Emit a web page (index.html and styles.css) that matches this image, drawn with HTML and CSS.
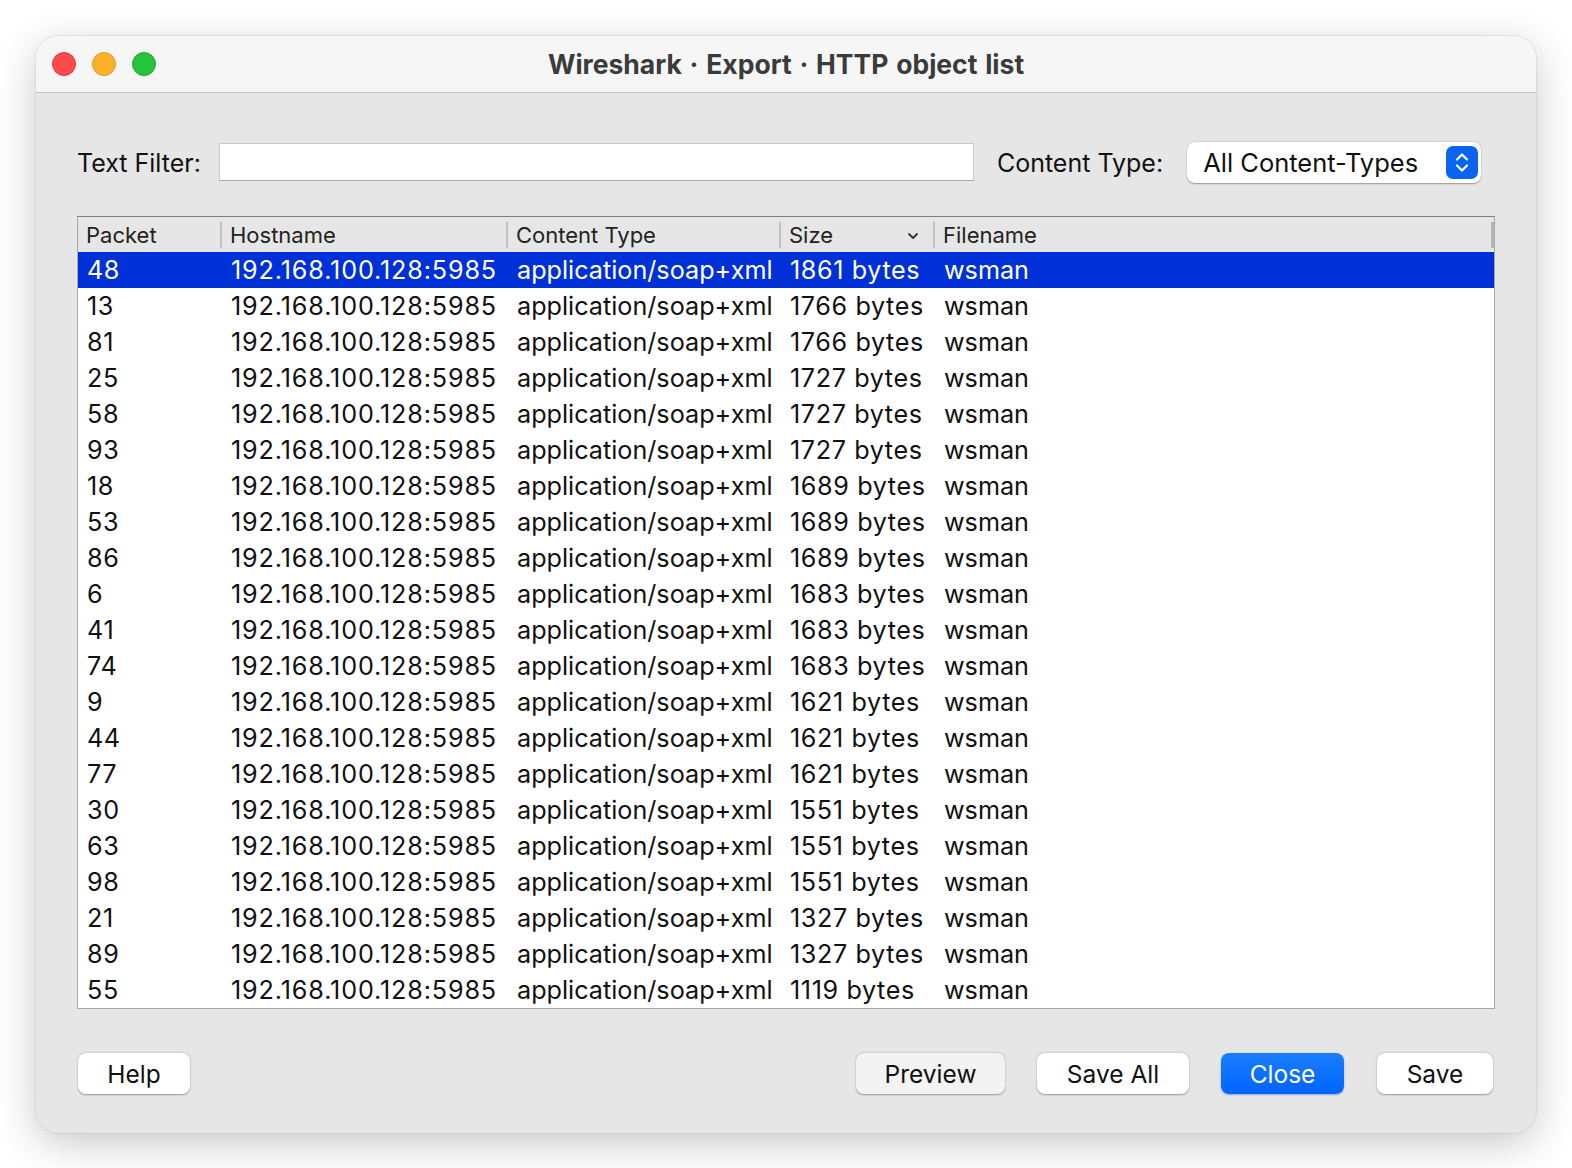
FILE: index.html
```html
<!DOCTYPE html>
<html>
<head>
<meta charset="utf-8">
<link rel="stylesheet" href="styles.css">
</head>
<body>
<div class="window">
  <div class="titlebar">
    <div class="lights">
      <span class="light red"></span>
      <span class="light yellow"></span>
      <span class="light green"></span>
    </div>
    <div class="title">Wireshark · Export · HTTP object list</div>
  </div>
  <div class="content">
    <div class="filter-row">
      <label class="lbl">Text Filter:</label>
      <div class="input"></div>
      <label class="lbl ct">Content Type:</label>
      <div class="select">
        <span>All Content-Types</span>
        <span class="stepper">
          <svg width="32" height="33" viewBox="0 0 32 33">
            <rect x="0" y="0" width="32" height="33" rx="7" fill="#0a64f0"/>
            <path d="M11 13.5 L16 8.5 L21 13.5" fill="none" stroke="#fff" stroke-width="2.2" stroke-linecap="round" stroke-linejoin="round"/>
            <path d="M11 19.5 L16 24.5 L21 19.5" fill="none" stroke="#fff" stroke-width="2.2" stroke-linecap="round" stroke-linejoin="round"/>
          </svg>
        </span>
      </div>
    </div>
    <div class="table">
      <div class="row head">
        <div class="c">Packet</div>
        <div class="c sep">Hostname</div>
        <div class="c sep">Content Type</div>
        <div class="c sep sort">Size<svg class="chev" width="12" height="8" viewBox="0 0 12 8"><path d="M2 2 L6 6 L10 2" fill="none" stroke="#333" stroke-width="1.8" stroke-linecap="round" stroke-linejoin="round"/></svg></div>
        <div class="c sep last">Filename</div>
      </div>
      <div id="rows"></div>
    </div>
    <div class="buttons">
      <button class="btn help">Help</button>
      <div class="spacer"></div>
      <button class="btn preview">Preview</button>
      <button class="btn saveall">Save All</button>
      <button class="btn primary close">Close</button>
      <button class="btn save">Save</button>
    </div>
  </div>
</div>
<script src="script.js"></script>
</body>
</html>
```
FILE: script.js
```js
var data = [
  [48,1861],[13,1766],[81,1766],[25,1727],[58,1727],[93,1727],[18,1689],
  [53,1689],[86,1689],[6,1683],[41,1683],[74,1683],[9,1621],[44,1621],
  [77,1621],[30,1551],[63,1551],[98,1551],[21,1327],[89,1327],[55,1119]
];
var html = '';
data.forEach(function (d, i) {
  html += '<div class="row body' + (i === 0 ? ' selected' : '') + '">' +
    '<div class="c num first">' + d[0] + '</div>' +
    '<div class="c host">192.168.100.128:5985</div>' +
    '<div class="c">application/soap+xml</div>' +
    '<div class="c num">' + d[1] + ' bytes</div>' +
    '<div class="c">wsman</div></div>';
});
document.getElementById('rows').innerHTML = html;
```
FILE: styles.css
```css
html, body {
  margin: 0;
  padding: 0;
  background: #ffffff;
}
body {
  padding: 36px;
  font-family: Inter, "Liberation Sans", sans-serif;
  color: #111;
}
.window {
  width: 1500px;
  height: 1097px;
  border-radius: 22px;
  background: #e6e6e6;
  box-shadow: 0 10px 40px rgba(0,0,0,0.22), 0 0 0 1px rgba(0,0,0,0.06);
  overflow: hidden;
  display: flex;
  flex-direction: column;
}
.titlebar {
  height: 57px;
  flex: none;
  background: #f6f6f6;
  border-bottom: 1px solid #c6c6c6;
  position: relative;
  display: flex;
  align-items: center;
  justify-content: center;
  box-sizing: border-box;
}
.lights {
  position: absolute;
  left: 16px;
  top: 16px;
  display: flex;
  gap: 16px;
}
.light {
  width: 24px;
  height: 24px;
  border-radius: 50%;
  box-sizing: border-box;
}
.red { background: #fe4b4d; border: 1px solid #e2393c; }
.yellow { background: #fdb02a; border: 1px solid #df9820; }
.green { background: #27c33a; border: 1px solid #1ea92d; }
.title {
  font-size: 26.5px;
  font-weight: 700;
  color: #3b3b3b;
  word-spacing: 1.5px;
  margin-top: 0px;
}
.content {
  flex: 1;
  padding: 0 41px 0 41px;
  display: flex;
  flex-direction: column;
}
.filter-row {
  display: flex;
  align-items: center;
  height: 42px;
  margin-top: 48px;
}
.lbl {
  font-size: 25px;
  color: #111;
  margin-top: 1px;
}
.input {
  width: 755px;
  height: 38px;
  margin-left: 18px;
  background: #fff;
  border: 1px solid #c9c9c9;
  border-bottom-color: #a8a8a8;
  box-sizing: border-box;
}
.lbl.ct {
  margin-left: 23px;
}
.select {
  margin-left: 24px;
  width: 294px;
  height: 41px;
  background: #fff;
  border-radius: 8px;
  box-shadow: 0 0.5px 1.5px rgba(0,0,0,0.35);
  display: flex;
  align-items: center;
  justify-content: space-between;
  box-sizing: border-box;
  padding: 0 3px 0 16px;
  font-size: 25.5px;
  color: #111;
}
.stepper { display: flex; }
.table {
  margin-top: 33px;
  background: #fff;
  border: 1px solid #a9a9a9;
  border-top-color: #7e7e7e;
  height: 793px;
  box-sizing: border-box;
  overflow: hidden;
}
.row {
  display: grid;
  grid-template-columns: 142px 286px 273px 154px 1fr;
  height: 36px;
  align-items: center;
}
.row.head {
  background: #e6e6e6;
  height: 35px;
  font-size: 22px;
  color: #222;
}
.head .c {
  padding-left: 8px;
  height: 26px;
  display: flex;
  align-items: center;
  position: relative;
}
.head .c.sep {
  border-left: 2px solid #c2c2c2;
  padding-left: 8px;
}
.head .c.last { border-right: 3px solid #b5b5b5; }
.head .sort { justify-content: space-between; padding-right: 14px; }
.chev { margin-top: 2px; }
.row.body {
  font-size: 25.2px;
  color: #111;
}
.body .c {
  padding-left: 11px;
  white-space: nowrap;
}
.body .c.first { padding-left: 9px; }
.body .c.num { letter-spacing: 0.6px; }
.body .c.host { letter-spacing: 0.85px; }
.row.selected {
  background: #0030d8;
  color: #fff;
}
.buttons {
  margin-top: 44px;
  padding-right: 2px;
  display: flex;
  align-items: center;
}
.spacer { flex: 1; }
.btn {
  font-family: Inter, "Liberation Sans", sans-serif;
  font-size: 24.5px;
  height: 41px;
  border: none;
  border-radius: 8px;
  background: #fff;
  color: #111;
  box-shadow: 0 0.5px 2px rgba(0,0,0,0.35);
  padding: 0;
}
.help { width: 112px; margin-left: 1px; }
.preview { width: 149px; background: #f3f3f3; }
.saveall { width: 152px; margin-left: 32px; }
.close { width: 123px; margin-left: 32px; background: linear-gradient(#1a7eff, #0064ff); color: #fff; box-shadow: 0 1px 2px rgba(0,80,220,0.4); }
.save { width: 116px; margin-left: 33px; }
```
